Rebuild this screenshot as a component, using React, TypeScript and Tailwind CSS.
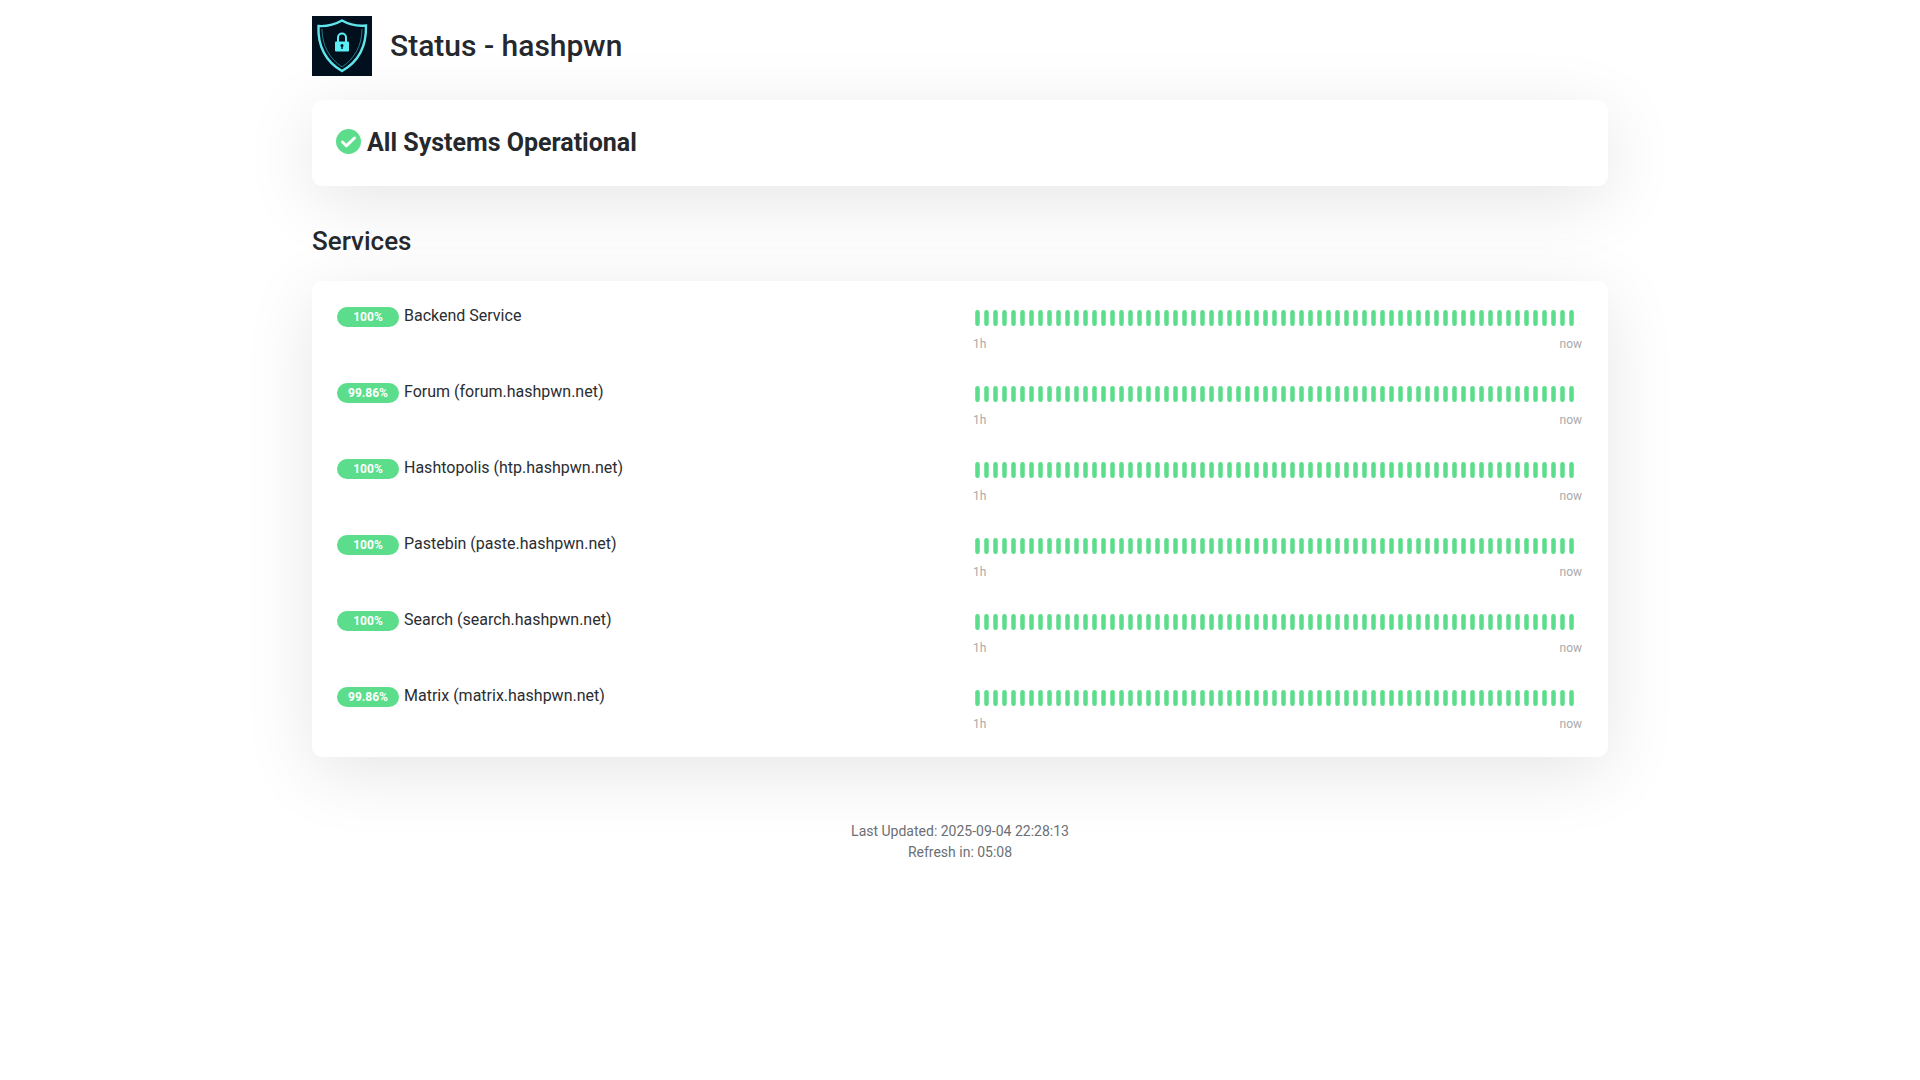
const services = [
  { name: 'Backend Service', uptime: '100%' },
  { name: 'Forum (forum.hashpwn.net)', uptime: '99.86%' },
  { name: 'Hashtopolis (htp.hashpwn.net)', uptime: '100%' },
  { name: 'Pastebin (paste.hashpwn.net)', uptime: '100%' },
  { name: 'Search (search.hashpwn.net)', uptime: '100%' },
  { name: 'Matrix (matrix.hashpwn.net)', uptime: '99.86%' },
]

const beats = Array.from({ length: 67 }, (_, i) => i)

function Logo() {
  return (
    <svg viewBox="0 0 60 60" className="block h-[60px] w-[60px] shrink-0 bg-[#01101c]">
      <path
        d="M30 4.500C23 8.500 15 10.500 6.500 10C5.500 30 14 46 30 55C46 46 54.500 30 54 9.500C45 10.500 37 8.500 30 4.500Z"
        fill="none"
        stroke="#5fe6ec"
        strokeWidth="2.400"
      />
      <path d="M10 13C10 30 18 43 30 51" fill="none" stroke="#2a97a3" strokeWidth="0.800" />
      <path d="M50 13C50 30 42 43 30 51" fill="none" stroke="#2a97a3" strokeWidth="0.800" />
      <path d="M26 26v-4.500a4 4 0 0 1 8 0v4.500" fill="none" stroke="#5ceef5" strokeWidth="2" />
      <rect x="23" y="25.500" width="14" height="10" rx="1" fill="#5ceef5" />
      <circle cx="30" cy="29.500" r="1.500" fill="#01101c" />
      <rect x="29.300" y="29.500" width="1.400" height="3.500" fill="#01101c" />
    </svg>
  )
}

function CheckIcon() {
  return (
    <svg viewBox="0 0 25 25" className="-mt-[3px] block h-[25px] w-[25px] shrink-0">
      <circle cx="12.500" cy="12.500" r="12.500" fill="#5cdd8b" />
      <path
        d="M6.500 13L10.300 16.800L18.500 9"
        fill="none"
        stroke="#ffffff"
        strokeWidth="3"
        strokeLinecap="round"
        strokeLinejoin="round"
      />
    </svg>
  )
}

function ServiceRow({ name, uptime }: { name: string; uptime: string }) {
  return (
    <div className="flex h-[76px] pl-[15px] pr-[16px] pt-[12px]">
      <div className="flex min-w-0 flex-1 items-start">
        <span className="mt-[4px] flex h-[20px] w-[62px] items-center justify-center rounded-full bg-[#5cdd8b] text-[12px] font-bold leading-none text-white">
          {uptime}
        </span>
        <span className="ml-[5px] mt-[1px] text-[16px] leading-[24px] text-[#2a2d31]">{name}</span>
      </div>
      <div className="w-[608px] shrink-0">
        {/* Barras de latidos */}
        <svg width="604" height="16" className="ml-[1px] mt-[7px] block">
          {beats.map((i) => (
            <rect key={i} x={i * 9 + 0.25} y="0" width="4.500" height="16" rx="2.250" fill="#5cdd8b" />
          ))}
        </svg>
        <div className="mt-[9px] flex justify-between text-[12px] leading-[18px] text-[#aaaaaa]">
          <span className="-ml-[1px]">1h</span>
          <span>now</span>
        </div>
      </div>
    </div>
  )
}

export default function App() {
  return (
    <div className="min-h-[1080px] bg-white font-['Roboto',sans-serif] text-[#25282c]">
      <div className="mx-auto w-[1320px] px-[12px] pt-[16px]">
        {/* Cabecera */}
        <div className="flex items-center">
          <Logo />
          <h1 className="ml-[18px] text-[30px] font-medium leading-[38px]">Status - hashpwn</h1>
        </div>

        {/* Estado general */}
        <div className="mt-[24px] flex h-[86px] items-center rounded-[10px] bg-white pl-[24px] shadow-[0_15px_70px_rgba(0,0,0,0.1)]">
          <CheckIcon />
          <span className="ml-[6px] text-[25px] font-bold leading-[34px]">All Systems Operational</span>
        </div>

        <h2 className="mt-[38px] text-[26px] font-medium leading-[34px]">Services</h2>

        {/* Lista */}
        <div className="mt-[23px] rounded-[10px] bg-white p-[10px] shadow-[0_15px_70px_rgba(0,0,0,0.1)]">
          {services.map((s) => (
            <ServiceRow key={s.name} name={s.name} uptime={s.uptime} />
          ))}
        </div>

        <footer className="mt-[64px] text-center text-[14px] leading-[21px] text-[#6c6f75]">
          <div>Last Updated: 2025-09-04 22:28:13</div>
          <div>Refresh in: 05:08</div>
        </footer>
      </div>
    </div>
  )
}
